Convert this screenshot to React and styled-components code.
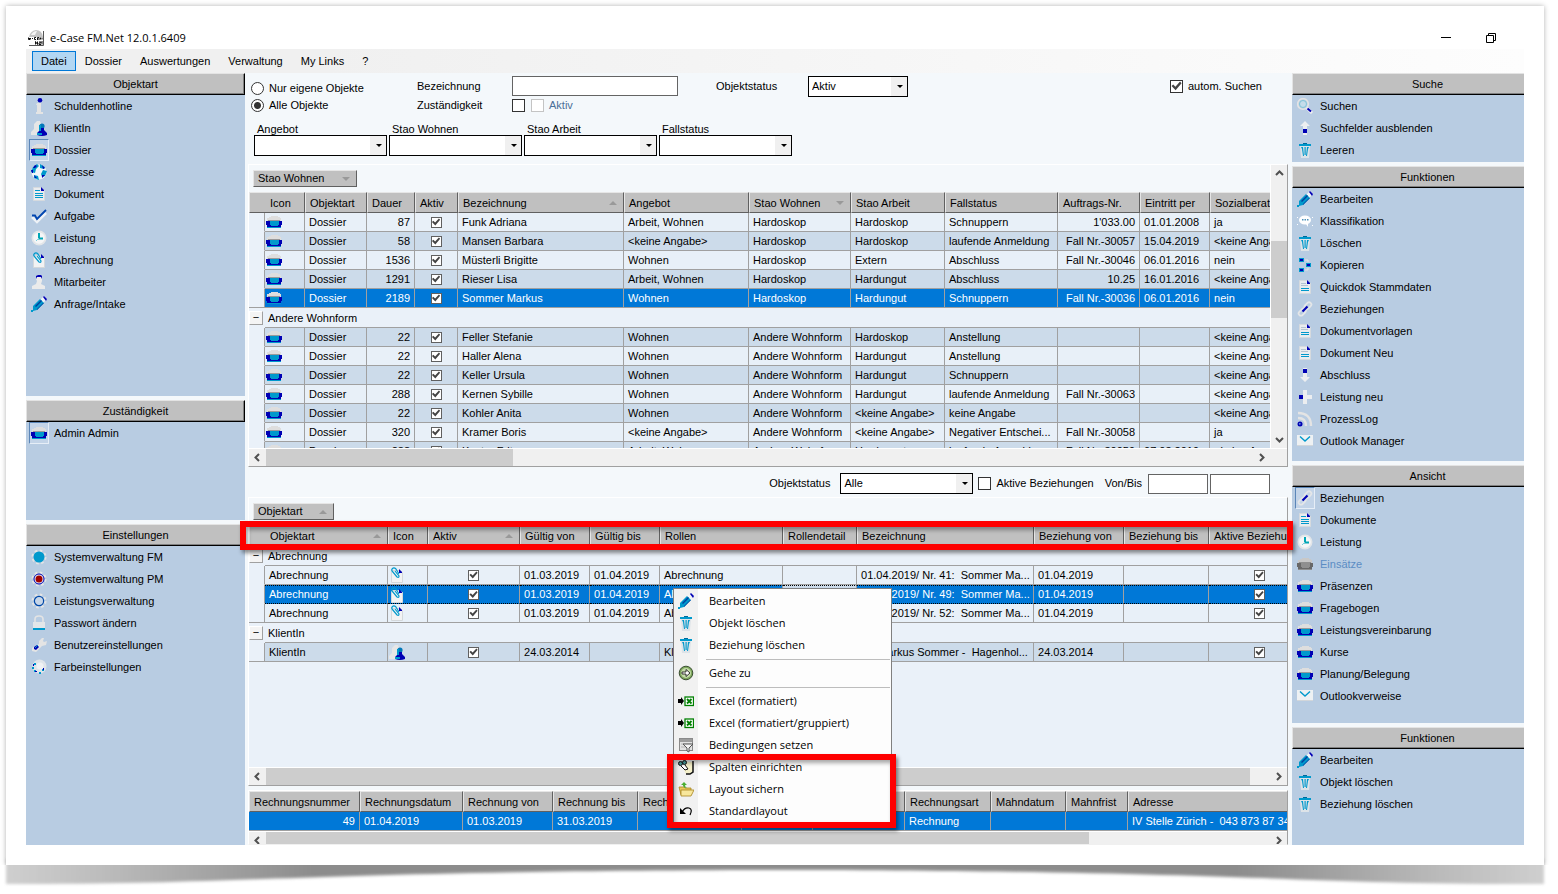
import React from "react";
import styled, { createGlobalStyle, css } from "styled-components";

const c = {
  panel: "#b8cce2",
  work: "#f4f8fb",
  grid: "#eaf1f9",
  rowLight: "#e8f0f8",
  rowAlt: "#ccdbea",
  select: "#0078d7",
  head: "#c0c0c0",
  line: "#a0a0a0",
  track: "#f0f0f0",
  thumb: "#cdcdcd",
  navy: "#0000b4",
  cyan: "#0099cc",
  pale: "#e4e4e4",
};

const GlobalStyle = createGlobalStyle`
  *, *::before, *::after { box-sizing: border-box; }
  body {
    margin: 0;
    background: #fff;
    color: #000;
    font: 11px/13px "Liberation Sans", Arial, sans-serif;
    overflow-x: hidden;
  }
  button, input, select { font: inherit; color: inherit; margin: 0; }
  button { border: 0; background: none; padding: 0; text-align: left; }
`;

/* ---------- icons ---------- */

const Svg = styled.svg`
  display: block;
  width: 16px;
  height: 16px;
  flex: none;
`;

const dossierShape = (base, mid, top, inner) => (
  <>
    <path d="M1 4h2V3h2V2h7v1h2v1h1v3H1z" fill={top} />
    <path d="M2 6h12v1H2z" fill={inner} />
    <path d="M0 7h16v4h-1v2H1v-2H0z" fill={base} />
    <path d="M1 13h14v1H1z" fill={mid} />
    <path d="M4 7h9v4h-1v1H5v-1H4z" fill={mid} />
  </>
);

const trashShape = (
  <>
    <path d="M3 4h10l-1 12H4z" fill="#dde3e8" />
    <path d="M4 5h2l1 9H6L5 7zM7.5 5h1.2v8H7.5zM12 5h-2l-1 9h1l1-7z" fill={c.cyan} />
    <path d="M2 2h12v2H2z" fill={c.cyan} />
    <path d="M6 1h4v1H6z" fill="#006a9a" />
  </>
);

const gearTeeth = (
  <circle cx="8" cy="8" r="6.5" fill="none" stroke={c.pale} strokeWidth="2" strokeDasharray="2.6 2.5" />
);

const docBody = (
  <>
    <path d="M2.500 1.500h7.500l3.500 3v10h-11z" fill="#e9ecef" stroke="#d6dade" />
    <path d="M10 1l3 3v1h-3z" fill={c.navy} />
  </>
);

const shapes = {
  dossier: dossierShape(c.navy, c.cyan, "#dedede", "#9a9a9a"),
  dossierOff: dossierShape("#686868", "#8f8f8f", "#c8c8c8", "#909090"),
  info: (
    <>
      <path d="M6 5h4v9h2v2H5v-2h1V7H5z" fill={c.pale} />
      <circle cx="9" cy="2.300" r="2.300" fill={c.navy} />
    </>
  ),
  client: (
    <>
      <path d="M3 4l3-3h3l1 3v5l3 4v2H0v-3l3-3z" fill="#e6e6e6" />
      <circle cx="11" cy="6" r="2.600" fill="#0077b8" />
      <path d="M9 8h4v2l3 3v2q-5 2-10 0v-2l3-3z" fill={c.navy} />
      <path d="M8 5h2v6H8zM6 13h5v2H6z" fill={c.cyan} />
    </>
  ),
  globe: (
    <>
      <circle cx="8" cy="8" r="7.500" fill="#f2f6fa" />
      <path d="M2 3l4-3 2 2-3 3-1 4-4-1zM9 0l5 3-1 2-4-1zM12 6l4 1-2 5-3 1-1-3zM3 11l4 1 1 4-5-2z" fill={c.cyan} />
      <path d="M4 1l2 1-2 2-2 0zM11 1l3 3-2 1zM11 11h3l-3 3zM3 11l3 3-2 0zM0 6h2v3H1z" fill={c.navy} />
    </>
  ),
  doc: (
    <>
      {docBody}
      <path d="M4 4.500h5M4 7.500h8M4 9.500h8M4 11.500h8" stroke={c.cyan} />
    </>
  ),
  docGray: (
    <>
      {docBody}
      <path d="M4 9.500h8M4 11.500h8" stroke={c.cyan} />
      <path d="M4 4.500h5M4 6.500h7" stroke="#b4c4d2" />
    </>
  ),
  check: (
    <>
      <path d="M1 9l5 5 9-9" fill="none" stroke="#eef2f6" strokeWidth="2.500" />
      <path d="M1 7.500h3l2 3.500 9-9" fill="none" stroke="#0045b0" strokeWidth="1.800" />
    </>
  ),
  clock: (
    <>
      <circle cx="8" cy="8" r="7.500" fill="#e2e5e8" />
      <circle cx="8" cy="8" r="5.800" fill="#f5f6f7" />
      <path d="M8 3v5.500h4" fill="none" stroke="#00a5b5" strokeWidth="2" />
      <path d="M8 8l-3 3" stroke="#7bd0dc" />
    </>
  ),
  clip: (
    <>
      <path d="M3.500 3.500h6.500l3.500 2v10h-11v-11z" fill="#f2f3f4" stroke="#d4d8db" />
      <path d="M10 2l3 3v1h-3z" fill={c.navy} />
      <path d="M10 7L7 2Q5 0 3.500 1.500t0 3L8 10q2 1 2-1L6 4" fill="none" stroke={c.cyan} strokeWidth="1.200" />
    </>
  ),
  staff: (
    <>
      <path d="M5 3l2-2h3l1 2v4l-1 3 4 2v3H1v-3l4-2 1-3-1-2z" fill="#ebebeb" />
      <path d="M5 5V2l2-1h3l1 1v3l-1-2H6z" fill={c.navy} />
    </>
  ),
  pencil: (
    <>
      <path d="M9 4l4-4 3 3-4 4z" fill="#f1f4f7" />
      <path d="M12 1l1-1 3 3-1 2z" fill={c.navy} />
      <path d="M2 10l7-7 4 4-7 7-4 1z" fill={c.cyan} />
      <path d="M4 10l6-6 1 1-6 6zM6 13l6-6 1 0-7 7z" fill="#003f9e" />
      <path d="M0 14h2v2H0z" fill={c.cyan} />
    </>
  ),
  gearFull: (
    <>
      {gearTeeth}
      <circle cx="8" cy="8" r="5.500" fill={c.cyan} />
    </>
  ),
  gearRed: (
    <>
      {gearTeeth}
      <circle cx="8" cy="8" r="5" fill="#f0f3f7" stroke={c.navy} />
      <circle cx="8" cy="8" r="3.500" fill="#a00000" />
    </>
  ),
  gearRing: (
    <>
      {gearTeeth}
      <circle cx="8" cy="8" r="4.600" fill="#c7d6e8" stroke="#0048a8" strokeWidth="1.200" />
    </>
  ),
  lock: (
    <>
      <path d="M4 7V4q0-3 4-3t4 3v3" fill="none" stroke={c.pale} strokeWidth="1.600" />
      <path d="M2 7h12v6H2z" fill="#e3e6e9" />
      <path d="M2 13h12v2H2z" fill={c.cyan} />
    </>
  ),
  wrench: (
    <>
      <path d="M1 14v-3l7-4V4l3-3h2l-1 3 1 1 3-1-1 4-4 1-6 6z" fill={c.pale} />
      <path d="M3 10l3-2 2 2-3 3-2-1z" fill={c.navy} />
      <path d="M4 11l3-3" stroke={c.cyan} />
    </>
  ),
  colors: (
    <>
      <circle cx="8.500" cy="7.500" r="7" fill="#dfe5ea" />
      <circle cx="9" cy="7" r="3.500" fill="#f0f2f4" />
      <path d="M3 4h2v2H3zM1 8h2v2H1zM3 11h2v2H3zM8 13h2v2H8zM11 10h2v2h-2z" fill={c.cyan} />
      <path d="M2 5h1v2H2zM4 12h2v1H4zM12 9h1v2h-1z" fill={c.navy} />
    </>
  ),
  search: (
    <>
      <circle cx="6" cy="6" r="5.300" fill="none" stroke={c.pale} strokeWidth="1.600" />
      <circle cx="6" cy="6" r="3.500" fill="#c5dcea" stroke="#7fc4d8" />
      <path d="M10 10l5 5" stroke="#f0f0f0" strokeWidth="3" />
      <path d="M10.500 10.500l3.500 3" stroke={c.navy} strokeWidth="2" />
    </>
  ),
  up: (
    <>
      <path d="M8 1l5 5h-3v9H6V6H3z" fill="#eceef0" />
      <path d="M6 9h4v4H6z" fill={c.navy} />
    </>
  ),
  down: (
    <>
      <path d="M8 15l5-5h-3V1H6v9H3z" fill="#eceef0" />
      <path d="M6 2h4v4H6z" fill={c.navy} />
    </>
  ),
  plus: (
    <>
      <path d="M6 1h4v5h5v4h-5v5H6v-5H3V6h3z" fill="#eceef0" />
      <path d="M2 6h4v4H2z" fill={c.navy} />
    </>
  ),
  trash: trashShape,
  bubble: (
    <>
      <ellipse cx="8" cy="7" rx="6" ry="4.500" fill="#fff" />
      <path d="M9 11l2 3 0-4z" fill="#fff" />
      <path d="M5 6h1.500v1.500H5zM7.500 6H9v1.500H7.500zM10 6h1.500v1.500H10z" fill="#4a8fb8" />
      <path d="M0 4h1v1H0zM15 4h1v1h-1zM0 11h1v1H0zM15 12h1v1h-1z" fill="#fff" />
    </>
  ),
  copy: (
    <>
      <path d="M2 1h5v4H2zM9 6h5v4H9zM2 11h5v4H2z" fill={c.cyan} />
      <path d="M3 2h3v2H3zM10 7h3v2h-3zM3 12h3v2H3z" fill={c.navy} />
      <path d="M8 3h3v2M8 13h3v-2" fill="none" stroke={c.pale} />
    </>
  ),
  link: (
    <>
      <rect x="7" y="2.500" width="8" height="4.500" rx="2.200" transform="rotate(-45 11 5)" fill="none" stroke="#e4e6e8" strokeWidth="1.800" />
      <rect x="1" y="9" width="8" height="4.500" rx="2.200" transform="rotate(-45 5 11)" fill="none" stroke="#e4e6e8" strokeWidth="1.800" />
      <path d="M5.500 10.500l5-5" stroke={c.navy} strokeWidth="2.200" />
    </>
  ),
  rss: (
    <>
      <path d="M1 2q13 0 13 13M1 7q8 0 8 8" fill="none" stroke={c.pale} strokeWidth="2.400" />
      <circle cx="3" cy="13" r="2.500" fill={c.navy} />
      <circle cx="2.800" cy="12.800" r=".9" fill="#6b9fe0" />
    </>
  ),
  mail: (
    <>
      <path d="M0 2h16v11H0z" fill="#eef1f3" />
      <path d="M3 3.500l5 4.500 5-4.500" fill="none" stroke={c.cyan} strokeWidth="1.400" />
      <path d="M0 12.500h16" stroke="#d2d6da" />
    </>
  ),
  go: (
    <>
      <circle cx="8" cy="8" r="6.800" fill="#7da65c" stroke="#3b4f33" />
      <circle cx="8" cy="8" r="5" fill="#c3dba8" />
      <path d="M4 7h4V4.500L12 8l-4 3.500V9H4z" fill="#fff" stroke="#222" strokeWidth=".9" />
    </>
  ),
  excel: (
    <>
      <path d="M0 6h3V4l3 4-3 4v-2H0z" fill="#000" />
      <rect x="7" y="4" width="8.500" height="8.500" fill="#fff" stroke="#008000" strokeWidth="1.300" />
      <path d="M9 6l4.500 4.500M13.500 6L9 10.500" stroke="#008000" strokeWidth="1.800" />
    </>
  ),
  filter: (
    <>
      <rect x="1.500" y="1.500" width="13" height="12" fill="#e2e2e2" stroke="#8a8a8a" />
      <path d="M2 2h12v3H2z" fill="#9c9c9c" />
      <path d="M3 7h10M3 10h10" stroke="#b4b4b4" />
      <path d="M5 7h10l-4 4v4l-2-1v-3z" fill="#f4f4f4" stroke="#555" />
    </>
  ),
  columns: (
    <>
      <path d="M6 3h9v9l-3 3H8L6 11z" fill="#f4efc8" />
      <path d="M15 2v11l-3 2H8" fill="none" stroke="#111" strokeWidth="1.500" />
      <circle cx="2.500" cy="4.500" r="2" fill="#4aa0a0" stroke="#111" />
      <circle cx="6.500" cy="3.500" r="2" fill="#4aa0a0" stroke="#111" />
      <path d="M3 7l4 4 3-1-3-4" fill="#fff" stroke="#111" />
    </>
  ),
  folder: (
    <>
      <path d="M1 6h5l1 1h6v7H3z" fill="#e8c95a" stroke="#a88520" strokeWidth=".8" />
      <path d="M3 9h13l-3 6H3z" fill="#f8e79c" stroke="#a88520" strokeWidth=".8" />
      <path d="M3 4l3-3 3 3H7q0 2 2 3-4 0-4-3z" fill="#4caf32" />
    </>
  ),
  undo: (
    <>
      <path d="M2 5v6h6z" fill="#000" />
      <path d="M4 9q3-5 7-4t1 7" fill="none" stroke="#000" strokeWidth="1.200" />
    </>
  ),
};

const Icon = ({ name }) => (
  <Svg viewBox="0 0 16 16" aria-hidden="true">
    {shapes[name]}
  </Svg>
);

/* ---------- page and window ---------- */

const Page = styled.div`
  min-height: 100vh;
  display: flex;
  flex-direction: column;
  padding: 6px 14px 0 6px;
`;

const Paper = styled.div`
  position: relative;
  z-index: 1;
  flex: 1;
  display: flex;
  flex-direction: column;
  padding: 20px;
  background: #fff;
  box-shadow: 0 0 5px rgba(0, 0, 0, 0.3);
  clip-path: inset(-6px -6px 0 -6px);
`;

const Curl = styled.svg`
  display: block;
  width: 100%;
  height: 29px;
  overflow: visible;
`;

const TitleBar = styled.header`
  display: flex;
  align-items: center;
  gap: 6px;
  height: 23px;
  padding: 0 28px 0 2px;
  font: 11px/16px "Open Sans", "Noto Sans", sans-serif;
`;

const Title = styled.h1`
  margin: 0;
  flex: 1;
  font: inherit;
`;

const WindowButton = styled.button`
  display: flex;
  align-items: center;
  justify-content: center;
  width: 10px;
  height: 16px;
  margin-left: 29px;
`;

const MenuBar = styled.nav`
  display: flex;
  height: 24px;
  padding: 2px 6px;
  background: linear-gradient(90deg, #f0f0f0 20%, #fdfdfd);
`;

const MenuButton = styled.button`
  padding: 0 8px;
  height: 20px;
  border: 1px solid ${(p) => (p.$open ? c.select : "transparent")};
  background: ${(p) => (p.$open ? "#b3d7f3" : "transparent")};
`;

const Body = styled.div`
  flex: 1;
  display: grid;
  grid-template-columns: 219px minmax(0, 1fr) 232px;
  background: ${c.work};
`;

/* ---------- side panels ---------- */

const Side = styled.aside`
  display: flex;
  flex-direction: column;
  gap: 4px;
`;

const PanelBox = styled.section`
  min-height: ${(p) => p.$min}px;
  flex: ${(p) => (p.$fill ? 1 : "none")};
  background: ${c.panel};
`;

const PanelTitle = styled.h2`
  margin: 0;
  height: 22px;
  padding-left: ${(p) => (p.$cut ? 38 : 0)}px;
  font: inherit;
  line-height: 20px;
  text-align: center;
  background: ${c.head};
  border-top: 1px solid #e3e3e3;
  border-left: 1px solid #e3e3e3;
  border-right: ${(p) => (p.$cut ? "0" : "1px solid #000")};
  border-bottom: 1px solid #000;
  box-shadow: inset ${(p) => (p.$cut ? 0 : -1)}px -1px 0 #808080;
`;

const ToolList = styled.ul`
  margin: 0;
  padding: 0 0 0 3px;
  list-style: none;
`;

const ToolButton = styled.button`
  display: flex;
  align-items: center;
  gap: 5px;
  width: 100%;
  height: 22px;
  color: ${(p) => (p.disabled ? "#5b8cc4" : "#000")};
`;

const IconSlot = styled.span`
  padding: 2px 1px;
  border: 1px solid transparent;
  ${(p) =>
    p.$active &&
    css`
      background: #c3d4e8;
      border-color: #5b86b8 #e6eef7 #e6eef7 #5b86b8;
    `}
`;

function Panel({ title, items, min, fill, cut }) {
  return (
    <PanelBox $min={min} $fill={fill}>
      <PanelTitle $cut={cut}>{title}</PanelTitle>
      <ToolList>
        {items.map(([icon, label, state]) => (
          <li key={label}>
            <ToolButton type="button" disabled={state === "off"}>
              <IconSlot $active={state === "on"}>
                <Icon name={icon} />
              </IconSlot>
              {label}
            </ToolButton>
          </li>
        ))}
      </ToolList>
    </PanelBox>
  );
}

/* ---------- form controls ---------- */

const Field = styled.input`
  display: block;
  width: ${(p) => p.$w}px;
  height: 20px;
  padding: 0 3px;
  border: 1px solid #646464;
  background: #fff;
`;

const SelectShell = styled.span`
  position: relative;
  display: block;
  width: ${(p) => p.$w}px;
  height: 21px;

  &::after {
    content: "";
    position: absolute;
    top: 9px;
    right: 5px;
    border: 3px solid transparent;
    border-top-color: #000;
    border-bottom: 0;
    pointer-events: none;
  }
`;

const SelectInput = styled.select`
  appearance: none;
  display: block;
  width: 100%;
  height: 21px;
  padding: 0 18px 0 3px;
  border: 1px solid #000;
  border-radius: 0;
  background: linear-gradient(90deg, #fff calc(100% - 16px), ${c.track} calc(100% - 16px));
`;

const Tick = styled.input.attrs({ type: "checkbox" })`
  appearance: none;
  display: block;
  flex: none;
  width: ${(p) => (p.$small ? 11 : 13)}px;
  height: ${(p) => (p.$small ? 11 : 13)}px;
  border: 1px solid ${(p) => (p.disabled ? "#c4c4c4" : p.$small ? "#606060" : "#333")};
  background: #fff;

  &:checked::before {
    content: "";
    display: block;
    width: 100%;
    height: 100%;
    background: #444;
    clip-path: polygon(5% 50%, 20% 36%, 40% 56%, 82% 10%, 96% 24%, 42% 88%);
  }
`;

const Radio = styled.input.attrs({ type: "radio" })`
  appearance: none;
  display: block;
  flex: none;
  width: 13px;
  height: 13px;
  border: 1px solid #333;
  border-radius: 50%;
  background: #fff;

  &:checked {
    background: radial-gradient(circle, #333 3px, #fff 4px);
  }
`;

const CheckLabel = styled.label`
  display: flex;
  align-items: center;
  gap: 5px;
  height: 13px;
  color: ${(p) => (p.$muted ? "#4a6f98" : "#000")};
`;

function Select({ id, width, value = "" }) {
  return (
    <SelectShell $w={width}>
      <SelectInput id={id} defaultValue={value}>
        <option>{value}</option>
      </SelectInput>
    </SelectShell>
  );
}

/* ---------- search form ---------- */

const Center = styled.main`
  display: flex;
  flex-direction: column;
  min-width: 0;
  padding: 0 4px 0 3px;
`;

const Search = styled.form`
  padding: 3px 0 8px 3px;
`;

const SearchTop = styled.div`
  display: grid;
  grid-template-columns: 166px 95px 204px 92px 1fr auto;
  grid-template-rows: 20px 18px;
  align-items: center;
  padding-right: 26px;
`;

const RadioGroup = styled.div`
  grid-row: 1 / 3;
  display: flex;
  flex-direction: column;
  gap: 4px;
  padding-top: 4px;
`;

const Inline = styled.div`
  display: flex;
  align-items: center;
  gap: 6px;
`;

const Combos = styled.div`
  display: flex;
  gap: 2px;
  padding: 9px 0 0 3px;
`;

const ComboLabel = styled.label`
  display: block;
  padding-left: 3px;
  line-height: 12px;
`;

const FilterBar = styled.form`
  display: flex;
  align-items: center;
  justify-content: flex-end;
  height: 30px;
  padding: 3px 18px 0 0;
`;

const FilterPart = styled.div`
  display: flex;
  align-items: center;
  gap: ${(p) => p.$gap}px;
  margin-left: ${(p) => p.$before}px;
`;

/* ---------- grids ---------- */

const GridBox = styled.div`
  position: relative;
  margin-top: ${(p) => p.$before || 0}px;
  border: 1px solid;
  border-color: #fff ${c.line} ${(p) => (p.$cut ? c.track : c.line)} #fff;
`;

const GridBody = styled.div`
  display: flex;
`;

const GridMain = styled.div`
  flex: 1;
  min-width: 0;
`;

const GroupBar = styled.div`
  height: 27px;
  padding: 5px 4px;
`;

const Chip = styled.button`
  display: flex;
  align-items: center;
  justify-content: space-between;
  width: ${(p) => p.$w}px;
  height: 17px;
  padding: 0 6px 0 4px;
  background: ${c.head};
  border: 1px solid;
  border-color: #e6e6e6 #606060 #606060 #e6e6e6;
`;

const Viewport = styled.div`
  height: ${(p) => p.$h}px;
  overflow: hidden;
  background: ${c.grid};
`;

const Table = styled.table`
  width: calc(100% + ${(p) => p.$extra || 0}px);
  table-layout: fixed;
  border-collapse: separate;
  border-spacing: 0;
`;

const Th = styled.th`
  height: 21px;
  padding: 1px 6px 0 ${(p) => (p.$indent ? 20 : 4)}px;
  font-weight: normal;
  line-height: 18px;
  text-align: left;
  white-space: nowrap;
  overflow: hidden;
  background: ${c.head};
  border: 1px solid;
  border-color: #e6e6e6 #606060 #606060 #e6e6e6;
`;

const ThInner = styled.span`
  display: flex;
  align-items: center;
  justify-content: space-between;
`;

const Sort = styled.span`
  border: 4px solid transparent;
  ${(p) =>
    p.$dir === "up"
      ? css`
          border-top: 0;
          border-bottom-color: #999;
        `
      : css`
          border-bottom: 0;
          border-top-color: #999;
        `}
`;

const Tr = styled.tr`
  color: ${(p) => (p.$tone === "select" ? "#fff" : "#000")};
  background: ${(p) => (p.$tone === "select" ? c.select : p.$tone === "alt" ? c.rowAlt : c.rowLight)};
`;

const Td = styled.td`
  height: 19px;
  padding: 0 ${(p) => (p.$icon ? 1 : 4)}px;
  line-height: 18px;
  text-align: ${(p) => (p.$right ? "right" : "left")};
  white-space: pre;
  overflow: hidden;
  border-right: 1px solid ${c.line};
  border-bottom: 1px solid ${c.line};
  ${(p) => p.$blank && `background: ${c.rowAlt};`}
  ${(p) =>
    p.$dotted &&
    css`
      border-top: 1px dotted #000;
      border-bottom: 1px dotted #000;
      line-height: 17px;
    `}
  & > input {
    margin: 0 auto;
  }
`;

const Indent = styled.td`
  padding: 0;
  background: ${c.grid};
  border-right: 1px solid ${(p) => (p.$open ? "transparent" : c.line)};
  border-bottom: 1px solid ${(p) => (p.$last ? c.line : "transparent")};
`;

const GroupTd = styled.td`
  height: 20px;
  padding: 1px 3px 0;
  line-height: 18px;
  background: ${c.grid};
  border-bottom: 1px solid ${c.line};
`;

const Toggle = styled.button`
  display: block;
  width: 14px;
  height: 14px;
  line-height: 11px;
  text-align: center;
  background: #f4f4f4;
  border: 1px solid;
  border-color: #fff ${c.line} ${c.line} #fff;
`;

const HBar = styled.div`
  display: flex;
  height: ${(p) => (p.$cut ? 13 : 18)}px;
  padding-right: ${(p) => (p.$corner ? 17 : 0)}px;
  overflow: hidden;
  background: ${c.track};
  border-top: 1px solid #fff;
`;

const VBar = styled.div`
  display: flex;
  flex-direction: column;
  width: 17px;
  background: ${c.track};
  border-left: 1px solid #fff;
`;

const ArrowButton = styled.button`
  display: flex;
  align-items: center;
  justify-content: center;
  flex: none;
  width: 17px;
  height: 17px;
`;

const Track = styled.div`
  flex: 1;
  display: flex;
  flex-direction: ${(p) => (p.$vertical ? "column" : "row")};
`;

const Thumb = styled.div`
  flex: 0 0 ${(p) => p.$size}%;
  margin-top: ${(p) => p.$top || 0}px;
  background: ${c.thumb};
`;

const arrows = {
  left: "M6 1L2.500 4.500 6 8",
  right: "M3 1l3.500 3.500L3 8",
  up: "M1 6l3.500-3.500L8 6",
  down: "M1 3l3.500 3.500L8 3",
};

const Arrow = ({ dir }) => (
  <ArrowButton type="button" aria-label={dir}>
    <svg width="9" height="9" viewBox="0 0 9 9">
      <path d={arrows[dir]} fill="none" stroke="#505050" strokeWidth="2" />
    </svg>
  </ArrowButton>
);

const HScroll = ({ size, corner, cut }) => (
  <HBar $corner={corner} $cut={cut}>
    <Arrow dir="left" />
    <Track>
      <Thumb $size={size} />
    </Track>
    <Arrow dir="right" />
  </HBar>
);

function Cell({ value, right, dotted }) {
  if (value && value.icon)
    return (
      <Td $icon $dotted={dotted}>
        <Icon name={value.icon} />
      </Td>
    );
  if (value === true)
    return (
      <Td $dotted={dotted}>
        <Tick $small defaultChecked aria-label="Aktiv" />
      </Td>
    );
  if (value === null) return <Td $dotted={dotted} $blank />;
  return (
    <Td $right={right} $dotted={dotted}>
      {value}
    </Td>
  );
}

function DataGrid({ cols, rows, indent, extra }) {
  return (
    <Table $extra={extra}>
      <colgroup>
        {indent && <col width="16" />}
        {cols.map((col, i) => (
          <col key={i} width={col.w} />
        ))}
      </colgroup>
      <thead>
        <tr>
          {cols.map((col, i) => (
            <Th key={i} $indent={indent && i === 0} colSpan={indent && i === 0 ? 2 : 1}>
              <ThInner>
                {col.label}
                {col.sort && <Sort $dir={col.sort} />}
              </ThInner>
            </Th>
          ))}
        </tr>
      </thead>
      <tbody>
        {rows.map((row, r) =>
          row.group ? (
            <tr key={r}>
              <Indent $open>
                <Toggle type="button" aria-label={"Gruppe " + row.group}>
                  −
                </Toggle>
              </Indent>
              <GroupTd colSpan={cols.length}>{row.group}</GroupTd>
            </tr>
          ) : (
            <Tr key={r} $tone={row.tone}>
              {indent && <Indent $last={row.last} />}
              {row.cells.map((v, i) => (
                <Cell key={i} value={v} right={cols[i].right} dotted={row.dotted} />
              ))}
            </Tr>
          )
        )}
      </tbody>
    </Table>
  );
}

/* ---------- context menu and marks ---------- */

const Mark = styled.div`
  position: absolute;
  z-index: 3;
  border: 6px solid #fe0000;
  box-shadow: 2px 3px 4px rgba(0, 0, 0, 0.45), inset 2px 3px 4px rgba(0, 0, 0, 0.35);
  pointer-events: none;
`;

const HeaderMark = styled(Mark)`
  top: 23px;
  left: -9px;
  right: -6px;
  height: 29px;
`;

const MenuMark = styled(Mark)`
  left: -7px;
  right: -5px;
  bottom: -4px;
  height: 74px;
`;

const Popup = styled.div`
  position: absolute;
  z-index: 2;
  top: 90px;
  left: 424px;
  width: 219px;
  padding: 1px 1px 2px 0;
  font: 11px/16px "Open Sans", "Noto Sans", sans-serif;
  border: 1px solid #808080;
  background: linear-gradient(90deg, #f1f1f1 24px, #fdfdfd 24px);
`;

const PopupItem = styled.button`
  display: flex;
  align-items: center;
  gap: 15px;
  width: 100%;
  height: 22px;
  padding-left: 4px;
`;

const PopupLine = styled.hr`
  height: 1px;
  margin: 3px 0 2px 32px;
  border: 0;
  background: #bdbdbd;
`;

/* ---------- data ---------- */

const left = [
  {
    title: "Objektart",
    min: 323,
    items: [
      ["info", "Schuldenhotline"],
      ["client", "KlientIn"],
      ["dossier", "Dossier", "on"],
      ["globe", "Adresse"],
      ["doc", "Dokument"],
      ["check", "Aufgabe"],
      ["clock", "Leistung"],
      ["clip", "Abrechnung"],
      ["staff", "Mitarbeiter"],
      ["pencil", "Anfrage/Intake"],
    ],
  },
  { title: "Zuständigkeit", min: 120, items: [["dossier", "Admin Admin", "on"]] },
  {
    title: "Einstellungen",
    fill: true,
    items: [
      ["gearFull", "Systemverwaltung FM"],
      ["gearRed", "Systemverwaltung PM"],
      ["gearRing", "Leistungsverwaltung"],
      ["lock", "Passwort ändern"],
      ["wrench", "Benutzereinstellungen"],
      ["colors", "Farbeinstellungen"],
    ],
  },
];

const right = [
  {
    title: "Suche",
    min: 89,
    items: [
      ["search", "Suchen"],
      ["up", "Suchfelder ausblenden"],
      ["trash", "Leeren"],
    ],
  },
  {
    title: "Funktionen",
    min: 295,
    items: [
      ["pencil", "Bearbeiten"],
      ["bubble", "Klassifikation"],
      ["trash", "Löschen"],
      ["copy", "Kopieren"],
      ["docGray", "Quickdok Stammdaten"],
      ["link", "Beziehungen"],
      ["docGray", "Dokumentvorlagen"],
      ["docGray", "Dokument Neu"],
      ["down", "Abschluss"],
      ["plus", "Leistung neu"],
      ["rss", "ProzessLog"],
      ["mail", "Outlook Manager"],
    ],
  },
  {
    title: "Ansicht",
    min: 258,
    items: [
      ["link", "Beziehungen", "on"],
      ["doc", "Dokumente"],
      ["clock", "Leistung"],
      ["dossierOff", "Einsätze", "off"],
      ["dossier", "Präsenzen"],
      ["dossier", "Fragebogen"],
      ["dossier", "Leistungsvereinbarung"],
      ["dossier", "Kurse"],
      ["dossier", "Planung/Belegung"],
      ["mail", "Outlookverweise"],
    ],
  },
  {
    title: "Funktionen",
    fill: true,
    items: [
      ["pencil", "Bearbeiten"],
      ["trash", "Objekt löschen"],
      ["trash", "Beziehung löschen"],
    ],
  },
];

const dossierCols = [
  { label: "Icon", w: 40 },
  { label: "Objektart", w: 62 },
  { label: "Dauer", w: 48, right: true },
  { label: "Aktiv", w: 43 },
  { label: "Bezeichnung", w: 166, sort: "up" },
  { label: "Angebot", w: 125 },
  { label: "Stao Wohnen", w: 102, sort: "down" },
  { label: "Stao Arbeit", w: 94 },
  { label: "Fallstatus", w: 113 },
  { label: "Auftrags-Nr.", w: 82, right: true },
  { label: "Eintritt per", w: 70 },
  { label: "Sozialberatung" },
];

const dossier = (tone, dauer, ...rest) => ({
  tone,
  cells: [{ icon: "dossier" }, "Dossier", dauer, true, ...rest],
});

const none = "<keine Angabe>";
const other = "Andere Wohnform";

const dossierRows = [
  dossier("", "87", "Funk Adriana", "Arbeit, Wohnen", "Hardoskop", "Hardoskop", "Schnuppern", "1'033.00", "01.01.2008", "ja"),
  dossier("alt", "58", "Mansen Barbara", none, "Hardoskop", "Hardoskop", "laufende Anmeldung", "Fall Nr.-30057", "15.04.2019", none),
  dossier("", "1536", "Müsterli Brigitte", "Wohnen", "Hardoskop", "Extern", "Abschluss", "Fall Nr.-30046", "06.01.2016", "nein"),
  dossier("alt", "1291", "Rieser Lisa", "Arbeit, Wohnen", "Hardoskop", "Hardungut", "Abschluss", "10.25", "16.01.2016", none),
  {
    ...dossier("select", "2189", "Sommer Markus", "Wohnen", "Hardoskop", "Hardungut", "Schnuppern", "Fall Nr.-30036", "06.01.2016", "nein"),
    last: true,
  },
  { group: other },
  dossier("alt", "22", "Feller Stefanie", "Wohnen", other, "Hardoskop", "Anstellung", "", "", none),
  dossier("", "22", "Haller Alena", "Wohnen", other, "Hardungut", "Anstellung", "", "", none),
  dossier("alt", "22", "Keller Ursula", "Wohnen", other, "Hardungut", "Schnuppern", "", "", none),
  dossier("", "288", "Kernen Sybille", "Wohnen", other, "Hardungut", "laufende Anmeldung", "Fall Nr.-30063", "", none),
  dossier("alt", "22", "Kohler Anita", "Wohnen", other, none, "keine Angabe", "", "", none),
  dossier("", "320", "Kramer Boris", none, other, none, "Negativer Entschei...", "Fall Nr.-30058", "", "ja"),
  dossier("alt", "288", "Kuster Fritz", "Arbeit, Wohnen", other, "Hardungut", "laufende Anmeldung", "Fall Nr.-30059", "07.03.2019", none),
];

const relationCols = [
  { label: "Objektart", w: 123, sort: "up" },
  { label: "Icon", w: 40 },
  { label: "Aktiv", w: 92, sort: "up" },
  { label: "Gültig von", w: 70 },
  { label: "Gültig bis", w: 70 },
  { label: "Rollen", w: 123 },
  { label: "Rollendetail", w: 74 },
  { label: "Bezeichnung", w: 177 },
  { label: "Beziehung von", w: 90 },
  { label: "Beziehung bis", w: 85 },
  { label: "Aktive Beziehung" },
];

const bill = (nr, extra = {}) => ({
  cells: [
    "Abrechnung",
    { icon: "clip" },
    true,
    "01.03.2019",
    "01.04.2019",
    "Abrechnung",
    extra.dotted ? null : "",
    `01.04.2019/ Nr. ${nr}:  Sommer Ma...`,
    "01.04.2019",
    "",
    true,
  ],
  ...extra,
});

const relationRows = [
  { group: "Abrechnung" },
  bill("41"),
  bill("49", { tone: "select", dotted: true }),
  bill("52", { last: true }),
  { group: "KlientIn" },
  {
    tone: "alt",
    last: true,
    cells: ["KlientIn", { icon: "client" }, true, "24.03.2014", "", "KlientIn", "", "Hr. Markus Sommer -  Hagenhol...", "24.03.2014", "", true],
  },
];

const billCols = [
  { label: "Rechnungsnummer", w: 111, right: true },
  { label: "Rechnungsdatum", w: 103 },
  { label: "Rechnung von", w: 90 },
  { label: "Rechnung bis", w: 85 },
  { label: "Rechnung", w: 104 },
  { label: "", w: 71 },
  { label: "", w: 92 },
  { label: "Rechnungsart", w: 86 },
  { label: "Mahndatum", w: 75 },
  { label: "Mahnfrist", w: 62 },
  { label: "Adresse" },
];

const billRows = [
  {
    tone: "select",
    cells: ["49", "01.04.2019", "01.03.2019", "31.03.2019", "", "", "", "Rechnung", "", "", "IV Stelle Zürich -  043 873 87 34"],
  },
];

const popup = [
  ["pencil", "Bearbeiten"],
  ["trash", "Objekt löschen"],
  ["trash", "Beziehung löschen"],
  null,
  ["go", "Gehe zu"],
  null,
  ["excel", "Excel (formatiert)"],
  ["excel", "Excel (formatiert/gruppiert)"],
  ["filter", "Bedingungen setzen"],
  ["columns", "Spalten einrichten"],
  ["folder", "Layout sichern"],
  ["undo", "Standardlayout"],
];

/* ---------- app ---------- */

export default function App() {
  return (
    <Page>
      <GlobalStyle />
      <Paper>
        <TitleBar>
          <Svg viewBox="0 0 16 16" aria-hidden="true">
            <path d="M1 7q1-6 7-7 6 0 7 7z" fill="#c4c4c4" />
            <path d="M3 5q2-4 6-4l-2 4z" fill="#f4f4f4" />
            <path d="M15.500 1v14.500H1" fill="none" stroke="#555" />
            <path
              d="M0 8.500h3M.5 7.500v2h2M4 8.500h1M8 7.500H6.500v2H8M9.500 10V7.500H11V10M12.500 7.500v2M14 7.500v2M7.500 14.500v-3l2 3v-3M11 12h2v1h-2v1.500h2M14 11v3.500"
              fill="none"
              stroke="#111"
            />
          </Svg>
          <Title>e-Case FM.Net 12.0.1.6409</Title>
          <WindowButton type="button" aria-label="Minimieren">
            <svg width="10" height="10" viewBox="0 0 10 10">
              <path d="M0 4.500h10" stroke="#000" />
            </svg>
          </WindowButton>
          <WindowButton type="button" aria-label="Wiederherstellen">
            <svg width="10" height="10" viewBox="0 0 10 10">
              <path d="M.5 2.500h7v7h-7zM2.500 2.500v-2h7v7h-2" fill="none" stroke="#000" />
            </svg>
          </WindowButton>
        </TitleBar>
        <MenuBar>
          {["Datei", "Dossier", "Auswertungen", "Verwaltung", "My Links", "?"].map((m, i) => (
            <MenuButton key={m} type="button" $open={i === 0}>
              {m}
            </MenuButton>
          ))}
        </MenuBar>
        <Body>
          <Side>
            {left.map((p) => (
              <Panel key={p.title} {...p} />
            ))}
          </Side>

          <Center>
            <Search>
              <SearchTop>
                <RadioGroup>
                  <CheckLabel>
                    <Radio name="scope" />
                    Nur eigene Objekte
                  </CheckLabel>
                  <CheckLabel>
                    <Radio name="scope" defaultChecked />
                    Alle Objekte
                  </CheckLabel>
                </RadioGroup>
                <label htmlFor="bez">Bezeichnung</label>
                <Field id="bez" $w={166} />
                <label htmlFor="status">Objektstatus</label>
                <Select id="status" width={100} value="Aktiv" />
                <CheckLabel>
                  <Tick defaultChecked />
                  autom. Suchen
                </CheckLabel>
                <label htmlFor="zust">Zuständigkeit</label>
                <Inline>
                  <Tick id="zust" />
                  <CheckLabel $muted>
                    <Tick disabled />
                    Aktiv
                  </CheckLabel>
                </Inline>
              </SearchTop>
              <Combos>
                {["Angebot", "Stao Wohnen", "Stao Arbeit", "Fallstatus"].map((l) => (
                  <div key={l}>
                    <ComboLabel htmlFor={l}>{l}</ComboLabel>
                    <Select id={l} width={133} />
                  </div>
                ))}
              </Combos>
            </Search>

            <GridBox>
              <GridBody>
                <GridMain>
                  <GroupBar>
                    <Chip type="button" $w={104}>
                      Stao Wohnen
                      <Sort $dir="down" />
                    </Chip>
                  </GroupBar>
                  <Viewport $h={256}>
                    <DataGrid cols={dossierCols} rows={dossierRows} indent extra={30} />
                  </Viewport>
                </GridMain>
                <VBar>
                  <Arrow dir="up" />
                  <Track $vertical>
                    <Thumb $size={31} $top={59} />
                  </Track>
                  <Arrow dir="down" />
                </VBar>
              </GridBody>
              <HScroll size={25} corner />
            </GridBox>

            <FilterBar>
              <FilterPart $gap={10} $before={0}>
                <label htmlFor="relstatus">Objektstatus</label>
                <Select id="relstatus" width={133} value="Alle" />
              </FilterPart>
              <FilterPart $gap={0} $before={5}>
                <CheckLabel>
                  <Tick />
                  Aktive Beziehungen
                </CheckLabel>
              </FilterPart>
              <FilterPart $gap={6} $before={11}>
                <label htmlFor="von">Von/Bis</label>
                <Field id="von" $w={60} />
              </FilterPart>
              <FilterPart $gap={0} $before={2}>
                <Field aria-label="Bis" $w={60} />
              </FilterPart>
            </FilterBar>

            <GridBox>
              <GroupBar>
                <Chip type="button" $w={81}>
                  Objektart
                  <Sort $dir="up" />
                </Chip>
              </GroupBar>
              <Viewport $h={242}>
                <DataGrid cols={relationCols} rows={relationRows} indent extra={24} />
              </Viewport>
              <HScroll size={98} />
              <HeaderMark />
              <Popup role="menu">
                {popup.map((item, i) =>
                  item ? (
                    <PopupItem key={i} type="button" role="menuitem">
                      <Icon name={item[0]} />
                      {item[1]}
                    </PopupItem>
                  ) : (
                    <PopupLine key={i} />
                  )
                )}
                <MenuMark />
              </Popup>
            </GridBox>

            <GridBox $before={4} $cut>
              <Viewport $h={40}>
                <DataGrid cols={billCols} rows={billRows} extra={20} />
              </Viewport>
              <HScroll size={82} cut />
            </GridBox>
          </Center>

          <Side>
            {right.map((p, i) => (
              <Panel key={i} {...p} cut />
            ))}
          </Side>
        </Body>
      </Paper>
      <Curl viewBox="0 0 1538 29" preserveAspectRatio="none" aria-hidden="true">
        <defs>
          <linearGradient id="curl">
            <stop offset="0" stopColor="#cfcfcf" />
            <stop offset=".06" stopColor="#bdbdbd" />
            <stop offset=".2" stopColor="#8c8c8c" />
            <stop offset=".8" stopColor="#8c8c8c" />
            <stop offset=".94" stopColor="#bdbdbd" />
            <stop offset="1" stopColor="#cfcfcf" />
          </linearGradient>
          <filter id="soft" x="-2%" y="-40%" width="104%" height="180%">
            <feGaussianBlur stdDeviation="1.500" />
          </filter>
        </defs>
        <path d="M0-6H1538V19C1300 20 1250 6 769 5C288 6 238 20 0 19z" fill="url(#curl)" filter="url(#soft)" />
      </Curl>
    </Page>
  );
}
